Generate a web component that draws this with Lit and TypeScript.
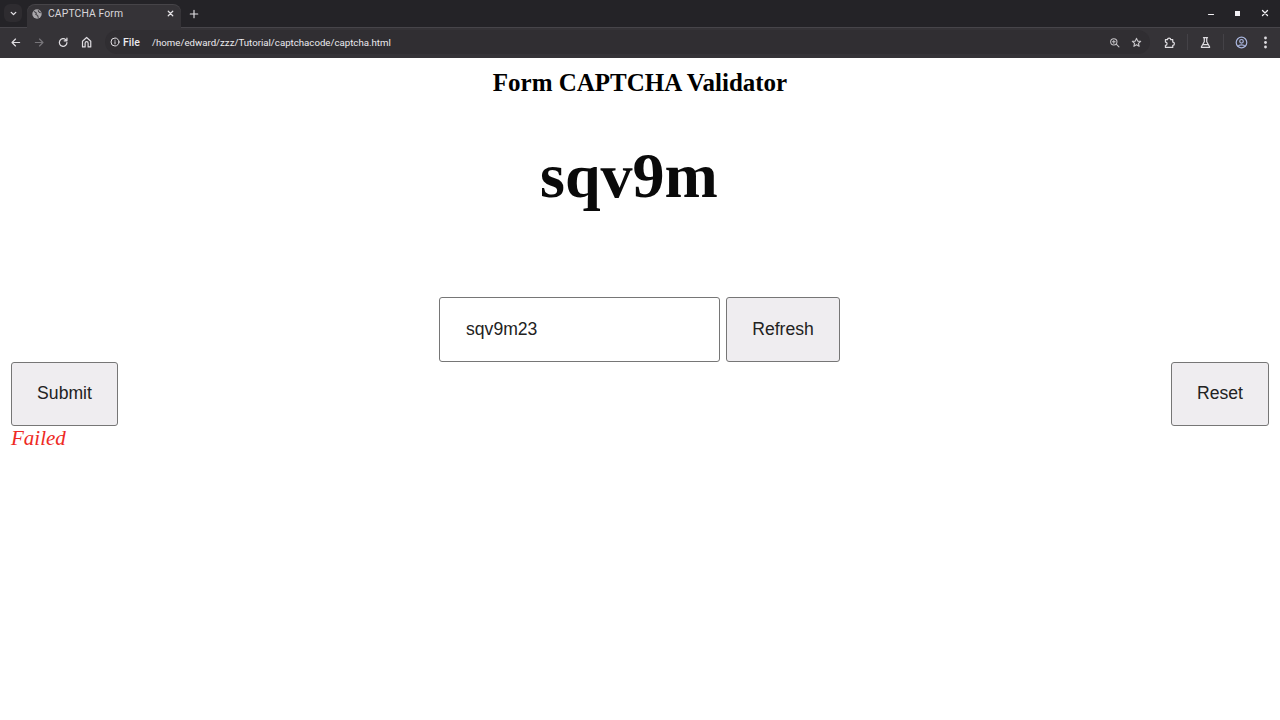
import { LitElement, html, css, svg } from "lit";
import { customElement } from "lit/decorators.js";

const ic = (body: unknown, size = 14, vb = 16) =>
  html`<svg width=${size} height=${size} viewBox="0 0 ${vb} ${vb}" fill="none" stroke="currentColor" stroke-width="1.5" stroke-linecap="round" stroke-linejoin="round">${body}</svg>`;

@customElement("app-root")
export class AppRoot extends LitElement {
  static styles = css`
    :host { display: block; width: 1280px; height: 720px; background: #fff; overflow: hidden; font-family: "Liberation Serif", serif; color: #000; }
    .chrome { font-family: Roboto, "Noto Sans", sans-serif; color: #e4e2e6; }
    svg { display: block; }
    .strip { height: 27px; box-sizing: border-box; background: #242327; display: flex; align-items: flex-end; padding-left: 4px; }
    .tablist { width: 18px; height: 18px; margin: 0 5px 5px 0; border-radius: 6px; background: #2e2c30; display: flex; align-items: center; justify-content: center; }
    .tab { position: relative; z-index: 1; width: 154px; height: 23px; margin-bottom: -1px; box-sizing: border-box; background: #353337; border-radius: 8px 8px 0 0; display: flex; align-items: center; padding: 0 6px 6px 5px; font-size: 10.4px; gap: 6px; box-shadow: 0 -1px 0 #464448; }
    .tab .t { flex: 1; white-space: nowrap; color: #d8d6da; letter-spacing: 0.1px; }
    .plus { margin: 0 0 8px 8px; display: flex; color: #e4e2e6; }
    .spacer { flex: 1; }
    .win { display: flex; align-items: center; margin-bottom: 6px; padding-right: 2px; }
    .win span { width: 27px; display: flex; justify-content: center; align-items: center; height: 16px; color: #f2f0f4; }
    .bar { height: 31px; box-sizing: border-box; background: #353337; border-top: 1px solid #47454a; display: flex; align-items: center; padding: 0 3px 2px; }
    .nb { width: 24px; height: 24px; display: flex; align-items: center; justify-content: center; color: #dfdde1; }
    .nb.off { color: #77757a; }
    .omni { margin-left: 6px; width: 1045px; height: 24px; box-sizing: border-box; padding-right: 3px; border-radius: 12px; background: #302e32; display: flex; align-items: center; }
    .chip { display: flex; align-items: center; gap: 3px; padding-left: 5px; width: 37px; font-weight: 500; color: #eceaee; font-size: 10.5px; }
    .url { margin-left: 5px; flex: 1; color: #ecebef; font-size: 9.66px; white-space: nowrap; }
    .omni .nb { width: 22px; color: #c6c4c8; }
    .ext { margin-left: 7px; display: flex; align-items: center; flex: 1; }
    .sep { width: 1px; height: 16px; background: #444247; margin: 0 5.5px; }
    .avatar { color: #a9b5dd; }
    .page { display: flex; flex-direction: column; }
    h1 { margin: 0; padding-top: 11px; font-size: 25px; line-height: 28px; font-weight: 700; text-align: center; }
    .code { margin-top: 42px; padding-right: 22px; text-align: center; font-size: 64px; line-height: 74px; font-weight: 700; color: #0a0a0a; }
    .row { margin-top: 84px; display: flex; justify-content: center; gap: 6px; padding-right: 1px; }
    input, button { box-sizing: border-box; font-family: "Liberation Sans", Arial, sans-serif; font-size: 17.6px; color: #222; border: 1px solid #767676; border-radius: 3px; }
    input { width: 281px; height: 65px; padding: 0 26px; background: #fff; outline: none; }
    button { height: 65px; background: #efedf0; padding: 0 25px; }
    .row button { width: 114px; }
    .actions { display: flex; justify-content: space-between; padding: 0 11px; }
    .actions button { height: 64px; padding-bottom: 2px; }
    .submit { width: 107px; }
    .reset { width: 98px; }
    .status { padding: 0 11px; font-size: 21px; line-height: 25px; font-style: italic; color: #ee2a24; }
  `;

  render() {
    return html`
      <div class="chrome">
        <div class="strip">
          <div class="tablist">${ic(svg`<path d="M4 6l4 4 4-4" stroke-width="2.400"/>`, 9)}</div>
          <div class="tab">
            <svg width="10" height="10" viewBox="0 0 16 16" fill="none"><circle cx="8" cy="8" r="7.500" fill="#a9a7ab"/><path d="M3 4l4 2-1 3 3 1 1 4M10 2l1 3 3 1" stroke="#353337" stroke-width="1.600"/></svg>
            <span class="t">CAPTCHA Form</span>
            ${ic(svg`<path d="M4 4l8 8M12 4l-8 8" stroke-width="2.200"/>`, 9)}
          </div>
          <div class="plus">${ic(svg`<path d="M8 2v12M2 8h12" stroke-width="1.800"/>`, 10)}</div>
          <div class="spacer"></div>
          <div class="win">
            <span>${ic(svg`<path d="M3 11h10" stroke-width="2.400"/>`, 8)}</span>
            <span><svg width="5" height="5" viewBox="0 0 5 5"><rect width="5" height="5" fill="currentColor"/></svg></span>
            <span>${ic(svg`<path d="M3 3l10 10M13 3L3 13" stroke-width="2.600"/>`, 8)}</span>
          </div>
        </div>
        <div class="bar">
          <span class="nb">${ic(svg`<path d="M14 8H3M8 3L3 8l5 5" stroke-width="1.800"/>`, 11)}</span>
          <span class="nb off">${ic(svg`<path d="M2 8h11M8 3l5 5-5 5" stroke-width="1.800"/>`, 11)}</span>
          <span class="nb">${ic(svg`<path d="M13 8a5.500 5.500 0 1 1-1.600-3.900M13 1.500v4H9" stroke-width="1.800"/>`, 11)}</span>
          <span class="nb">${ic(svg`<path d="M2 14.500V7l5.500-5L13 7v7.500H9.500V9.500a2 2 0 0 0-4 0v5z" stroke-width="1.600"/>`, 12)}</span>
          <div class="omni">
            <span class="chip">${ic(svg`<circle cx="8" cy="8" r="6.400"/><path d="M8 7.500v3.500M8 5v.2"/>`, 10)}File</span>
            <span class="url">/home/edward/zzz/Tutorial/captchacode/captcha.html</span>
            <span class="nb">${ic(svg`<circle cx="7" cy="7" r="4.600"/><path d="M10.500 10.500L14.500 14.500M5 7h4M7 5v4"/>`, 11)}</span>
            <span class="nb">${ic(svg`<path d="M8 2l1.800 4 4.200.4-3.200 2.800 1 4.300L8 11.200 4.200 13.500l1-4.300L2 6.400 6.200 6z" stroke-width="1.700"/>`, 11)}</span>
          </div>
          <div class="ext">
            <span class="nb">${ic(svg`<path d="M3 4.500h2.500a2 2 0 0 1 4 0H12v3a2 2 0 0 1 0 4V14H3v-2.500a2 2 0 0 0 0-4z"/>`, 13)}</span>
            <span class="sep"></span>
            <span class="nb">${ic(svg`<path d="M5.500 2h5M6.500 2v5L3 13.200V14h10v-.8L9.500 7V2M5 10.500h6"/>`, 13)}</span>
            <span class="sep"></span>
            <span class="nb avatar">${ic(svg`<circle cx="8" cy="8" r="6.500"/><circle cx="8" cy="6.500" r="2.200"/><path d="M3.800 12.500c1-2 7.400-2 8.400 0"/>`, 13)}</span>
            <span class="nb"><svg width="3" height="13" viewBox="0 0 3 13" fill="currentColor"><circle cx="1.500" cy="2" r="1.400"/><circle cx="1.500" cy="6.500" r="1.400"/><circle cx="1.500" cy="11" r="1.400"/></svg></span>
          </div>
        </div>
      </div>
      <div class="page">
        <h1>Form CAPTCHA Validator</h1>
        <div class="code">sqv9m</div>
        <div class="row">
          <input type="text" value="sqv9m23" />
          <button>Refresh</button>
        </div>
        <div class="actions">
          <button class="submit">Submit</button>
          <button class="reset">Reset</button>
        </div>
        <div class="status">Failed</div>
      </div>
    `;
  }
}
